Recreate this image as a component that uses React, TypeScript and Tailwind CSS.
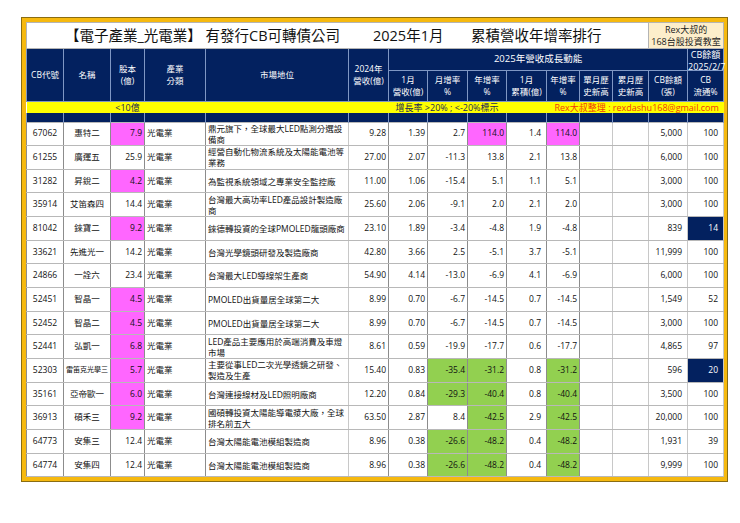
import React from 'react';

type Row = {
  code: string;
  name: string;
  cap: string;
  desc: string;
  rev: string;
  jan: string;
  mom: string;
  yoy: string;
  cum: string;
  cumYoy: string;
  cb: string;
  flow: string;
};

const rows: Row[] = [
  { code: '67062', name: '惠特二', cap: '7.9', desc: '鼎元旗下\uFF0C全球最大LED點測分選設備商', rev: '9.28', jan: '1.39', mom: '2.7', yoy: '114.0', cum: '1.4', cumYoy: '114.0', cb: '5,000', flow: '100' },
  { code: '61255', name: '廣運五', cap: '25.9', desc: '經營自動化物流系統及太陽能電池等業務', rev: '27.00', jan: '2.07', mom: '-11.3', yoy: '13.8', cum: '2.1', cumYoy: '13.8', cb: '6,000', flow: '100' },
  { code: '31282', name: '昇銳二', cap: '4.2', desc: '為監視系統領域之專業安全監控廠', rev: '11.00', jan: '1.06', mom: '-15.4', yoy: '5.1', cum: '1.1', cumYoy: '5.1', cb: '3,000', flow: '100' },
  { code: '35914', name: '艾笛森四', cap: '14.4', desc: '台灣最大高功率LED產品設計製造廠商', rev: '25.60', jan: '2.06', mom: '-9.1', yoy: '2.0', cum: '2.1', cumYoy: '2.0', cb: '3,000', flow: '100' },
  { code: '81042', name: '錸寶二', cap: '9.2', desc: '錸德轉投資的全球PMOLED龍頭廠商', rev: '23.10', jan: '1.89', mom: '-3.4', yoy: '-4.8', cum: '1.9', cumYoy: '-4.8', cb: '839', flow: '14' },
  { code: '33621', name: '先進光一', cap: '14.2', desc: '台灣光學鏡頭研發及製造廠商', rev: '42.80', jan: '3.66', mom: '2.5', yoy: '-5.1', cum: '3.7', cumYoy: '-5.1', cb: '11,999', flow: '100' },
  { code: '24866', name: '一詮六', cap: '23.4', desc: '台灣最大LED導線架生產商', rev: '54.90', jan: '4.14', mom: '-13.0', yoy: '-6.9', cum: '4.1', cumYoy: '-6.9', cb: '6,000', flow: '100' },
  { code: '52451', name: '智晶一', cap: '4.5', desc: 'PMOLED出貨量居全球第二大', rev: '8.99', jan: '0.70', mom: '-6.7', yoy: '-14.5', cum: '0.7', cumYoy: '-14.5', cb: '1,549', flow: '52' },
  { code: '52452', name: '智晶二', cap: '4.5', desc: 'PMOLED出貨量居全球第二大', rev: '8.99', jan: '0.70', mom: '-6.7', yoy: '-14.5', cum: '0.7', cumYoy: '-14.5', cb: '3,000', flow: '100' },
  { code: '52441', name: '弘凱一', cap: '6.8', desc: 'LED產品主要應用於高端消費及車燈市場', rev: '8.61', jan: '0.59', mom: '-19.9', yoy: '-17.7', cum: '0.6', cumYoy: '-17.7', cb: '4,865', flow: '97' },
  { code: '52303', name: '雷笛克光學三', cap: '5.7', desc: '主要從事LED二次光學透鏡之研發\u3001製造及生產', rev: '15.40', jan: '0.83', mom: '-35.4', yoy: '-31.2', cum: '0.8', cumYoy: '-31.2', cb: '596', flow: '20' },
  { code: '35161', name: '亞帝歐一', cap: '6.0', desc: '台灣連接線材及LED照明廠商', rev: '12.20', jan: '0.84', mom: '-29.3', yoy: '-40.4', cum: '0.8', cumYoy: '-40.4', cb: '3,500', flow: '100' },
  { code: '36913', name: '碩禾三', cap: '9.2', desc: '國碩轉投資太陽能導電漿大廠\uFF0C全球排名前五大', rev: '63.50', jan: '2.87', mom: '8.4', yoy: '-42.5', cum: '2.9', cumYoy: '-42.5', cb: '20,000', flow: '100' },
  { code: '64773', name: '安集三', cap: '12.4', desc: '台灣太陽能電池模組製造商', rev: '8.96', jan: '0.38', mom: '-26.6', yoy: '-48.2', cum: '0.4', cumYoy: '-48.2', cb: '1,931', flow: '39' },
  { code: '64774', name: '安集四', cap: '12.4', desc: '台灣太陽能電池模組製造商', rev: '8.96', jan: '0.38', mom: '-26.6', yoy: '-48.2', cum: '0.4', cumYoy: '-48.2', cb: '9,999', flow: '100' },
];

const colWidths = [37, 47, 34, 61, 143, 40, 39, 40, 39, 40, 33, 33, 36, 39, 36];

const head = 'border border-[#7f97c4] bg-[#03215f] text-white font-normal text-center align-middle leading-[12.5px] p-0 text-[8.5px]';
const cell = 'border-y border-y-[#b8b8b8] border-x border-x-[#8c8c8c] p-0 align-middle';
const lightCell = 'border-y border-y-[#b8b8b8] border-x border-x-[#c8c8c8] p-0 align-middle';
const num = `${cell} text-right pr-[2px]`;

function growthTint(value: string) {
  const n = parseFloat(value);
  if (n > 20) return 'bg-[#ff66ff]';
  if (n < -20) return 'bg-[#92d050]';
  return '';
}

export default function App() {
  return (
    <div className="min-h-[523px] bg-white pt-[17px] pl-[21px] [font-family:'Open_Sans','Noto_Sans_CJK_TC',sans-serif]">
      <div className="w-[707px] border border-[#8a6d12] bg-white">
        <div className="border-[4px] border-[#f6b90f]">
          <table className="w-[697px] table-fixed border-collapse text-[8.5px] text-[#111]">
            <colgroup>
              {colWidths.map((w, i) => (
                <col key={i} style={{ width: w }} />
              ))}
            </colgroup>
            <thead>
              <tr className="h-[26px]">
                <th colSpan={13} className="border border-[#b4b4b4] p-0 text-[14.5px] font-normal leading-[22px] text-[#111]">
                  <div className="flex pl-[38px] text-left">
                    <span className="w-[308px] whitespace-nowrap">【電子產業_光電業】 有發行CB可轉債公司</span>
                    <span className="w-[98px] whitespace-nowrap">2025年1月</span>
                    <span className="whitespace-nowrap">累積營收年增率排行</span>
                  </div>
                </th>
                <th colSpan={2} className="border border-[#b4b4b4] bg-[#fdeecb] p-0 text-center text-[9px] font-normal leading-[12px] text-[#222]">
                  Rex大叔的
                  <br />
                  168台股投資教室
                </th>
              </tr>
              <tr className="h-[22px]">
                <th rowSpan={2} className={head}>CB代號</th>
                <th rowSpan={2} className={head}>名稱</th>
                <th rowSpan={2} className={head}>股本<br />(億)</th>
                <th rowSpan={2} className={head}>產業<br />分類</th>
                <th rowSpan={2} className={head}>市場地位</th>
                <th rowSpan={2} className={head}>2024年<br />營收(億)</th>
                <th colSpan={8} className={`${head} !text-[9.5px]`}>2025年營收成長動能</th>
                <th colSpan={2} className={`${head} !align-top`}>
                  <div className="h-[20px] text-[9px] leading-[12px]">CB餘額<br />2025/2/7</div>
                </th>
              </tr>
              <tr className="h-[31px]">
                <th className={head}>1月<br />營收(億)</th>
                <th className={head}>月增率<br />%</th>
                <th className={head}>年增率<br />%</th>
                <th className={head}>1月<br />累積(億)</th>
                <th className={head}>年增率<br />%</th>
                <th className={head}>單月歷<br />史新高</th>
                <th className={head}>累月歷<br />史新高</th>
                <th className={head}>CB餘額<br />(張)</th>
                <th className={head}>CB<br />流通%</th>
              </tr>
              <tr className="h-[11px] bg-[#ffff00] text-[9px] font-normal leading-[11px]">
                <td colSpan={2} />
                <td className="text-center text-[#1b2a55]">&lt;10億</td>
                <td colSpan={3} />
                <td colSpan={4} className="whitespace-nowrap pl-[7px] text-[#1b2a55]">增長率 &gt;20% ; &lt;-20%標示</td>
                <td colSpan={5} className="whitespace-nowrap pl-[8px] text-[#f03a0a]">Rex大叔整理 : rexdashu168@gmail.com</td>
              </tr>
              <tr className="h-[9px]">
                {colWidths.map((_, i) => (
                  <td key={i} className="border-x border-[#7f97c4] bg-[#03215f] p-0" />
                ))}
              </tr>
            </thead>
            <tbody>
              {rows.map((r) => (
                <tr key={r.code} className="h-[23.67px]">
                  <td className={`${cell} text-center`}>{r.code}</td>
                  <td className={`${cell} whitespace-nowrap text-center ${r.name.length > 5 ? 'text-[7px]' : ''}`}>{r.name}</td>
                  <td className={`${num} ${parseFloat(r.cap) < 10 ? 'bg-[#ff66ff]' : ''}`}>{r.cap}</td>
                  <td className={`${cell} pl-[2px]`}>光電業</td>
                  <td className={`${lightCell} px-[2px] leading-[11px]`}>{r.desc}</td>
                  <td className={num}>{r.rev}</td>
                  <td className={num}>{r.jan}</td>
                  <td className={`${num} ${growthTint(r.mom)}`}>{r.mom}</td>
                  <td className={`${num} ${growthTint(r.yoy)}`}>{r.yoy}</td>
                  <td className={`${num} pr-[5px]`}>{r.cum}</td>
                  <td className={`${num} ${growthTint(r.cumYoy)}`}>{r.cumYoy}</td>
                  <td className={lightCell} />
                  <td className={lightCell} />
                  <td className={`${lightCell} text-right pr-[5px]`}>{r.cb}</td>
                  <td className={`${lightCell} text-right pr-[5px] ${parseFloat(r.flow) < 30 ? 'bg-[#03215f] text-white' : ''}`}>{r.flow}</td>
                </tr>
              ))}
            </tbody>
          </table>
        </div>
      </div>
    </div>
  );
}
